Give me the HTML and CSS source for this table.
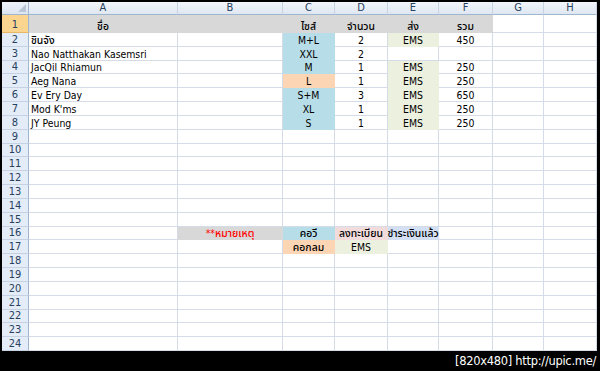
FILE: index.html
```html
<!DOCTYPE html>
<html lang="th">
<head>
<meta charset="utf-8">
<title>Sheet</title>
<link rel="stylesheet" href="styles.css">
</head>
<body>
<div class="frame">
  <div class="sheet">
    <div class="row colhdr">
      <div class="corner"><span class="tri"></span></div>
      <div class="ch">A</div><div class="ch">B</div><div class="ch">C</div><div class="ch">D</div><div class="ch">E</div><div class="ch">F</div><div class="ch">G</div><div class="ch">H</div>
    </div>
    <div class="row tall">
      <div class="rh sel">1</div>
      <div class="c grey ctr th">ชื่อ</div><div class="c grey"></div><div class="c grey ctr th">ไซส์</div><div class="c grey ctr th">จำนวน</div><div class="c grey ctr th">ส่ง</div><div class="c grey ctr th">รวม</div><div class="c"></div><div class="c"></div>
    </div>
    <div class="row">
      <div class="rh">2</div>
      <div class="c th">ชินจัง</div><div class="c"></div><div class="c blue ctr">M+L</div><div class="c ctr">2</div><div class="c green ctr">EMS</div><div class="c ctr">450</div><div class="c"></div><div class="c"></div>
    </div>
    <div class="row">
      <div class="rh">3</div>
      <div class="c">Nao Natthakan Kasemsri</div><div class="c"></div><div class="c blue ctr">XXL</div><div class="c ctr">2</div><div class="c"></div><div class="c"></div><div class="c"></div><div class="c"></div>
    </div>
    <div class="row">
      <div class="rh">4</div>
      <div class="c">JacQil Rhiamun</div><div class="c"></div><div class="c blue ctr">M</div><div class="c ctr">1</div><div class="c green ctr">EMS</div><div class="c ctr">250</div><div class="c"></div><div class="c"></div>
    </div>
    <div class="row">
      <div class="rh">5</div>
      <div class="c">Aeg Nana</div><div class="c"></div><div class="c peach ctr">L</div><div class="c ctr">1</div><div class="c green ctr">EMS</div><div class="c ctr">250</div><div class="c"></div><div class="c"></div>
    </div>
    <div class="row">
      <div class="rh">6</div>
      <div class="c">Ev Ery Day</div><div class="c"></div><div class="c blue ctr">S+M</div><div class="c ctr">3</div><div class="c green ctr">EMS</div><div class="c ctr">650</div><div class="c"></div><div class="c"></div>
    </div>
    <div class="row">
      <div class="rh">7</div>
      <div class="c">Mod K'ms</div><div class="c"></div><div class="c blue ctr">XL</div><div class="c ctr">1</div><div class="c green ctr">EMS</div><div class="c ctr">250</div><div class="c"></div><div class="c"></div>
    </div>
    <div class="row">
      <div class="rh">8</div>
      <div class="c">JY Peung</div><div class="c"></div><div class="c blue ctr">S</div><div class="c ctr">1</div><div class="c green ctr">EMS</div><div class="c ctr">250</div><div class="c"></div><div class="c"></div>
    </div>
    <div class="row"><div class="rh">9</div><div class="c"></div><div class="c"></div><div class="c"></div><div class="c"></div><div class="c"></div><div class="c"></div><div class="c"></div><div class="c"></div></div>
    <div class="row"><div class="rh">10</div><div class="c"></div><div class="c"></div><div class="c"></div><div class="c"></div><div class="c"></div><div class="c"></div><div class="c"></div><div class="c"></div></div>
    <div class="row"><div class="rh">11</div><div class="c"></div><div class="c"></div><div class="c"></div><div class="c"></div><div class="c"></div><div class="c"></div><div class="c"></div><div class="c"></div></div>
    <div class="row"><div class="rh">12</div><div class="c"></div><div class="c"></div><div class="c"></div><div class="c"></div><div class="c"></div><div class="c"></div><div class="c"></div><div class="c"></div></div>
    <div class="row"><div class="rh">13</div><div class="c"></div><div class="c"></div><div class="c"></div><div class="c"></div><div class="c"></div><div class="c"></div><div class="c"></div><div class="c"></div></div>
    <div class="row"><div class="rh">14</div><div class="c"></div><div class="c"></div><div class="c"></div><div class="c"></div><div class="c"></div><div class="c"></div><div class="c"></div><div class="c"></div></div>
    <div class="row"><div class="rh">15</div><div class="c"></div><div class="c"></div><div class="c"></div><div class="c"></div><div class="c"></div><div class="c"></div><div class="c"></div><div class="c"></div></div>
    <div class="row">
      <div class="rh">16</div>
      <div class="c"></div><div class="c grey ctr note th">**หมายเหตุ</div><div class="c blue ctr th">คอวี</div><div class="c pink ctr th">ลงทะเบียน</div><div class="c sky ctr th">ชำระเงินแล้ว</div><div class="c"></div><div class="c"></div><div class="c"></div>
    </div>
    <div class="row">
      <div class="rh">17</div>
      <div class="c"></div><div class="c"></div><div class="c peach ctr th">คอกลม</div><div class="c green ctr">EMS</div><div class="c"></div><div class="c"></div><div class="c"></div><div class="c"></div>
    </div>
    <div class="row"><div class="rh">18</div><div class="c"></div><div class="c"></div><div class="c"></div><div class="c"></div><div class="c"></div><div class="c"></div><div class="c"></div><div class="c"></div></div>
    <div class="row"><div class="rh">19</div><div class="c"></div><div class="c"></div><div class="c"></div><div class="c"></div><div class="c"></div><div class="c"></div><div class="c"></div><div class="c"></div></div>
    <div class="row"><div class="rh">20</div><div class="c"></div><div class="c"></div><div class="c"></div><div class="c"></div><div class="c"></div><div class="c"></div><div class="c"></div><div class="c"></div></div>
    <div class="row"><div class="rh">21</div><div class="c"></div><div class="c"></div><div class="c"></div><div class="c"></div><div class="c"></div><div class="c"></div><div class="c"></div><div class="c"></div></div>
    <div class="row"><div class="rh">22</div><div class="c"></div><div class="c"></div><div class="c"></div><div class="c"></div><div class="c"></div><div class="c"></div><div class="c"></div><div class="c"></div></div>
    <div class="row"><div class="rh">23</div><div class="c"></div><div class="c"></div><div class="c"></div><div class="c"></div><div class="c"></div><div class="c"></div><div class="c"></div><div class="c"></div></div>
    <div class="row"><div class="rh">24</div><div class="c"></div><div class="c"></div><div class="c"></div><div class="c"></div><div class="c"></div><div class="c"></div><div class="c"></div><div class="c"></div></div>
  </div>
  <div class="footer"><span class="mark">[820x480] http://upic.me/</span></div>
</div>
</body>
</html>
```

FILE: styles.css
```css
* { box-sizing: border-box; }
html, body { margin: 0; padding: 0; background: #000; }
body { width: 600px; height: 371px; overflow: hidden; }
.frame { display: flex; flex-direction: column; width: 600px; height: 371px; }
.sheet {
  display: flex; flex-direction: column;
  margin: 2px 3px 0 2px; width: 595px; height: 349px;
  background: #fff; overflow: hidden;
  font-family: "DejaVu Sans Condensed", "DejaVu Sans", Tahoma, "Noto Sans Thai", "Loma", "Garuda", sans-serif;
  font-stretch: condensed;
  font-size: 10.4px; color: #000;
}
.row {
  display: grid;
  grid-template-columns: 27px 149px 105px 52px 53px 51px 54px 51px 53px;
  height: 13.83px; flex: none;
}
.row.colhdr { height: 13px; }
.row.tall { height: 18px; }
.c {
  border-right: 1px solid #d5dbe7; border-bottom: 1px solid #d5dbe7;
  white-space: nowrap; overflow: visible; padding: 0 2px;
  display: flex; align-items: flex-end; line-height: 12px;
  position: relative;
}
.th { font-weight: 500; }
.ctr { justify-content: center; }
.grey { background: #d8d8d8; border-color: #d8d8d8; }
.blue { background: #b7dde8; border-color: #b7dde8; }
.peach { background: #fcd5b4; border-color: #fcd5b4; }
.green { background: #ebf1de; border-color: #ebf1de; }
.pink { background: #f2dcdb; border-color: #f2dcdb; }
.sky { background: #d3e0f3; border-color: #d3e0f3; }
.note { color: #ff0000; }
.ch {
  background: linear-gradient(#f3f6fb, #dfe7f2);
  border-right: 1px solid #c8d4e4; border-bottom: 1px solid #9eb6ce;
  display: flex; align-items: center; justify-content: center;
  color: #27415f; font-size: 11px; line-height: 12px;
}
.corner {
  background: linear-gradient(#eef3fa, #dce5f1);
  border-right: 1px solid #9eb6ce; border-bottom: 1px solid #9eb6ce;
  position: relative;
}
.tri {
  position: absolute; right: 2px; bottom: 2px; width: 0; height: 0;
  border-left: 8px solid transparent; border-bottom: 8px solid #b8c6d8;
}
.rh {
  background: #e4ecf7;
  border-right: 1px solid #9eb6ce; border-bottom: 1px solid #c5d2e3;
  display: flex; align-items: flex-end; justify-content: center;
  color: #27415f; font-size: 11px; line-height: 12px;
}
.rh.sel { background: #fbd58f; border-bottom-color: #e8b765; align-items: flex-end; padding-bottom: 1px; }
.footer {
  flex: 1; display: flex; justify-content: flex-end; align-items: center;
  padding-right: 4px;
}
.mark {
  color: #fff; font-family: "DejaVu Sans", sans-serif; font-size: 11.5px;
  letter-spacing: -0.3px;
}
```
